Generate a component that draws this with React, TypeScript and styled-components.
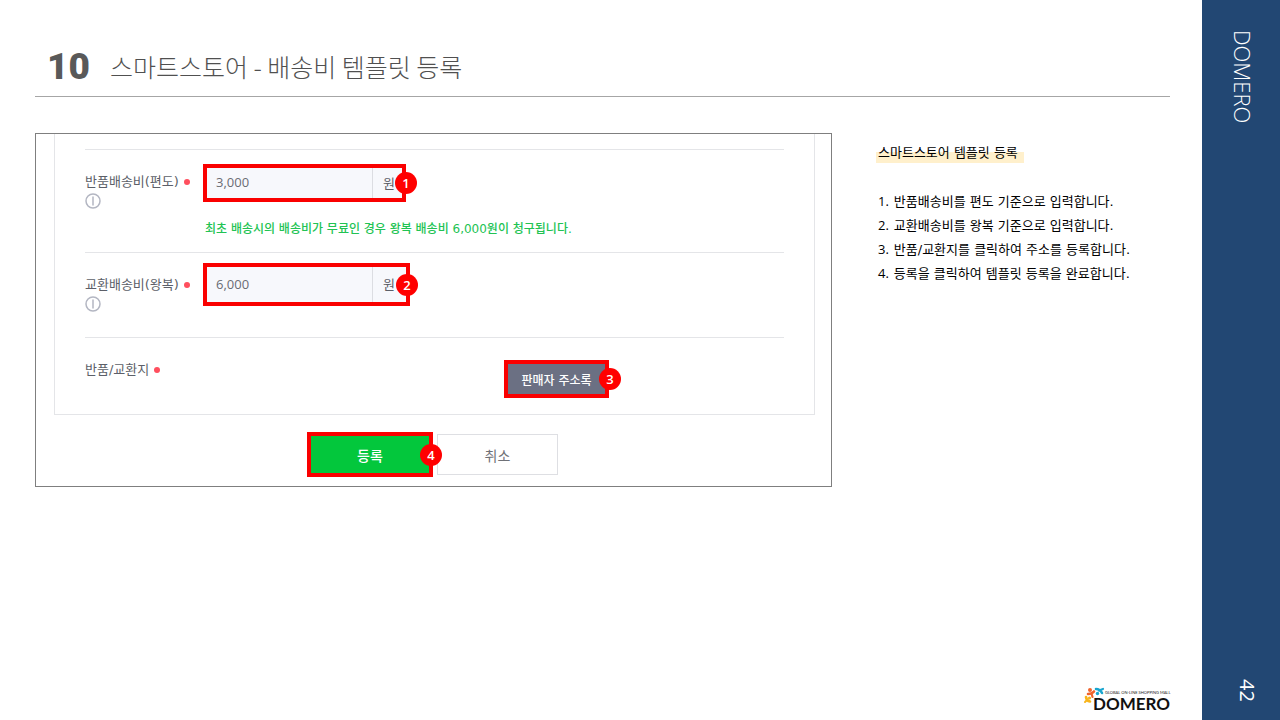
import React from "react";
import styled, { createGlobalStyle } from "styled-components";

const GlobalStyle = createGlobalStyle`
  *, *::before, *::after { box-sizing: border-box; }
  body {
    margin: 0;
    background: #ffffff;
    color: #000000;
    font-family: "Open Sans", "Noto Sans CJK KR", sans-serif;
    font-size: 13px;
  }
`;

const koreanFirst = `"DejaVu Sans", "Noto Sans CJK KR", sans-serif`;

const Page = styled.div`
  display: flex;
  min-height: 100vh;
`;

const Main = styled.main`
  flex: 1;
  min-width: 0;
  display: flex;
  flex-direction: column;
  padding: 0 28px 4px 35px;
`;

const Header = styled.header`
  display: flex;
  align-items: center;
  gap: 20px;
  height: 97px;
  margin-right: 4px;
  padding: 36px 0 0 12px;
  border-bottom: 1px solid #a6a6a6;
`;

const Chapter = styled.span`
  padding-top: 2px;
  font-family: Roboto, sans-serif;
  font-size: 37px;
  line-height: 54px;
  font-weight: 900;
  color: #595959;
`;

const Title = styled.h1`
  margin: 0;
  font-family: "Noto Sans CJK KR", sans-serif;
  font-size: 25px;
  line-height: 40px;
  font-weight: 300;
  color: #505050;
`;

const Content = styled.div`
  display: flex;
  align-items: flex-start;
  gap: 45px;
  margin: 36px 4px 0 0;
`;

const Frame = styled.form`
  flex: 1;
  min-width: 0;
  padding: 0 16px 9px 18px;
  border: 1px solid #7f7f7f;
`;

const Panel = styled.div`
  padding: 15px 30px 0;
  border: solid #e4e5e8;
  border-width: 0 1px 1px;
`;

const Row = styled.div<{ $height: number }>`
  display: flex;
  min-height: ${(p) => p.$height}px;
  border-top: 1px solid #e4e5e8;
`;

const LabelCell = styled.div`
  flex: none;
  width: 118px;
  padding-top: 22px;
  font-family: ${koreanFirst};
  line-height: 20px;
  color: #5c5f68;
`;

const Label = styled.label`
  white-space: nowrap;
`;

const Required = styled.span`
  display: inline-block;
  width: 6px;
  height: 6px;
  margin-left: 5px;
  border-radius: 50%;
  background: #ff4f5e;
  vertical-align: 1px;
`;

const InfoButton = styled.button`
  display: block;
  margin: 1px 0 0;
  padding: 0;
  border: 0;
  background: none;
  line-height: 0;
`;

const Field = styled.div<{ $top: number; $left?: number }>`
  padding-top: ${(p) => p.$top}px;
  padding-left: ${(p) => p.$left ?? 0}px;
`;

const Mark = styled.div<{ $width: number; $height: number }>`
  position: relative;
  display: flex;
  width: ${(p) => p.$width}px;
  height: ${(p) => p.$height}px;
  border: 4px solid #fa0000;
`;

const Badge = styled.span<{ $over: number }>`
  position: absolute;
  top: calc(50% - 11px);
  right: -${(p) => p.$over}px;
  width: 22px;
  height: 22px;
  border-radius: 50%;
  background: #ff0000;
  color: #ffffff;
  font-size: 13px;
  line-height: 22px;
  font-weight: 600;
  text-align: center;
`;

const Amount = styled.input`
  width: 166px;
  padding: 0 9px 2px;
  border: 0;
  border-right: 1px solid #dcdde2;
  border-radius: 0;
  background: #f7f8fc;
  color: #6a6c74;
  font-family: inherit;
  font-size: 13px;
`;

const Unit = styled.span`
  flex: 1;
  display: flex;
  align-items: center;
  padding: 0 0 2px 10px;
  background: #f7f8fc;
  color: #5c5f68;
`;

const Hint = styled.p`
  margin: 17px 0 0 2px;
  font-family: ${koreanFirst};
  font-size: 12px;
  line-height: 20px;
  font-weight: 500;
  color: #22c353;
`;

const MarkedButton = styled.button<{ $tone: "slate" | "green" }>`
  flex: 1;
  padding: 0;
  border: 0;
  background: ${(p) => (p.$tone === "green" ? "#03c73c" : "#6b7083")};
  color: #ffffff;
  font-family: ${koreanFirst};
  font-size: ${(p) => (p.$tone === "green" ? 14 : 12)}px;
  font-weight: 500;
`;

const CancelButton = styled.button`
  width: 121px;
  height: 41px;
  padding: 0;
  border: 1px solid #dedfe3;
  background: #ffffff;
  color: #6f7177;
  font-family: ${koreanFirst};
  font-size: 14px;
`;

const Actions = styled.div`
  display: flex;
  justify-content: center;
  align-items: center;
  gap: 4px;
  margin-top: 17px;
  padding-right: 4px;
`;

const Notes = styled.aside`
  flex: none;
  width: 294px;
  margin-left: -1px;
  padding-top: 8px;
  font-family: ${koreanFirst};
  line-height: 24px;
`;

const NotesTitle = styled.h2`
  display: table;
  margin: 0 0 24px;
  padding: 0 6px 0 2px;
  background: linear-gradient(#fff0cc, #fff0cc) 0 11px / 100% 11px no-repeat;
  font-size: 13px;
  line-height: 24px;
  font-weight: 400;
`;

const Steps = styled.ol`
  margin: 0;
  padding: 0 0 0 2px;
  list-style: none;
`;

const Step = styled.li`
  display: flex;
  align-items: baseline;
  gap: 5px;
  height: 24px;
`;

const StepNumber = styled.span`
  font-family: "Open Sans", sans-serif;
`;

const Footer = styled.footer`
  display: flex;
  justify-content: flex-end;
  margin-top: auto;
`;

const Side = styled.div`
  flex: none;
  width: 78px;
  display: flex;
  flex-direction: column;
  justify-content: space-between;
  align-items: center;
  padding: 30px 0 18px;
  background: #224773;
  color: #ffffff;
`;

const SideName = styled.span`
  writing-mode: vertical-rl;
  margin-left: 4px;
  font-size: 22px;
  line-height: 30px;
  font-weight: 300;
`;

const PageNumber = styled.span`
  writing-mode: vertical-rl;
  margin-left: 12px;
  font-size: 20px;
  line-height: 28px;
`;

const InfoIcon = () => (
  <svg width="16" height="16" viewBox="0 0 16 16" fill="none" stroke="#b3b6c2" aria-hidden="true">
    <circle cx="8" cy="8" r="7" strokeWidth="1.5" />
    <path d="M8 3.5V12.5" strokeWidth="1.5" />
  </svg>
);

const Logo = () => (
  <svg width="91" height="32" viewBox="0 0 91 32" role="img" aria-label="DOMERO">
    <g fill="none" strokeLinecap="round" strokeLinejoin="round">
      <path d="M5 10Q9 10 11 7.5" stroke="#f0642d" strokeWidth="2.6" />
      <path d="M8.5 9.5L9.5 13" stroke="#f0642d" strokeWidth="2.2" />
      <path d="M13 5Q17 5 19 9" stroke="#18a5cf" strokeWidth="2.6" />
      <path d="M16 6.5L20 5" stroke="#18a5cf" strokeWidth="2.2" />
      <path d="M3 13Q3.5 17 7 17.5" stroke="#f8b51c" strokeWidth="2.6" />
      <path d="M4 16L2 18" stroke="#f8b51c" strokeWidth="2" />
    </g>
    <circle cx="7" cy="6" r="2" fill="#f0642d" />
    <circle cx="14.5" cy="9.5" r="1.7" fill="#18a5cf" />
    <circle cx="6.5" cy="14" r="1.6" fill="#f8b51c" />
    <text x="22" y="10" fontFamily="Lato" fontSize="4" fill="#222222">
      GLOBAL ON-LINE SHOPPING MALL
    </text>
    <text x="10" y="26" fontFamily="Lato" fontSize="17" fontWeight="700" fill="#111111">
      DOMERO
    </text>
  </svg>
);

const fees = [
  { id: "return-fee", label: "반품배송비(편도)", value: "3,000", row: 103, top: 14, width: 203, height: 38, over: 15,
    hint: "최초 배송시의 배송비가 무료인 경우 왕복 배송비 6,000원이 청구됩니다." },
  { id: "exchange-fee", label: "교환배송비(왕복)", value: "6,000", row: 85, top: 10, width: 207, height: 43, over: 12, hint: "" },
];

const steps = [
  "반품배송비를 편도 기준으로 입력합니다.",
  "교환배송비를 왕복 기준으로 입력합니다.",
  "반품/교환지를 클릭하여 주소를 등록합니다.",
  "등록을 클릭하여 템플릿 등록을 완료합니다.",
];

export default function App() {
  return (
    <Page>
      <GlobalStyle />
      <Main>
        <Header>
          <Chapter>10</Chapter>
          <Title>스마트스토어 - 배송비 템플릿 등록</Title>
        </Header>
        <Content>
          <Frame onSubmit={(e) => e.preventDefault()}>
            <Panel>
              {fees.map((fee, i) => (
                <Row key={fee.id} $height={fee.row}>
                  <LabelCell>
                    <Label htmlFor={fee.id}>
                      {fee.label}
                      <Required />
                    </Label>
                    <InfoButton type="button" aria-label="도움말">
                      <InfoIcon />
                    </InfoButton>
                  </LabelCell>
                  <Field $top={fee.top}>
                    <Mark $width={fee.width} $height={fee.height}>
                      <Amount id={fee.id} defaultValue={fee.value} />
                      <Unit>원</Unit>
                      <Badge $over={fee.over}>{i + 1}</Badge>
                    </Mark>
                    {fee.hint && <Hint>{fee.hint}</Hint>}
                  </Field>
                </Row>
              ))}
              <Row $height={77}>
                <LabelCell>
                  <Label htmlFor="address-book">
                    반품/교환지
                    <Required />
                  </Label>
                </LabelCell>
                <Field $top={22} $left={301}>
                  <Mark $width={105} $height={38}>
                    <MarkedButton id="address-book" type="button" $tone="slate">
                      판매자 주소록
                    </MarkedButton>
                    <Badge $over={16}>3</Badge>
                  </Mark>
                </Field>
              </Row>
            </Panel>
            <Actions>
              <Mark $width={126} $height={45}>
                <MarkedButton type="submit" $tone="green">
                  등록
                </MarkedButton>
                <Badge $over={13}>4</Badge>
              </Mark>
              <CancelButton type="button">취소</CancelButton>
            </Actions>
          </Frame>
          <Notes>
            <NotesTitle>스마트스토어 템플릿 등록</NotesTitle>
            <Steps>
              {steps.map((text, i) => (
                <Step key={text}>
                  <StepNumber>{i + 1}.</StepNumber>
                  <span>{text}</span>
                </Step>
              ))}
            </Steps>
          </Notes>
        </Content>
        <Footer>
          <Logo />
        </Footer>
      </Main>
      <Side>
        <SideName>DOMERO</SideName>
        <PageNumber>42</PageNumber>
      </Side>
    </Page>
  );
}
